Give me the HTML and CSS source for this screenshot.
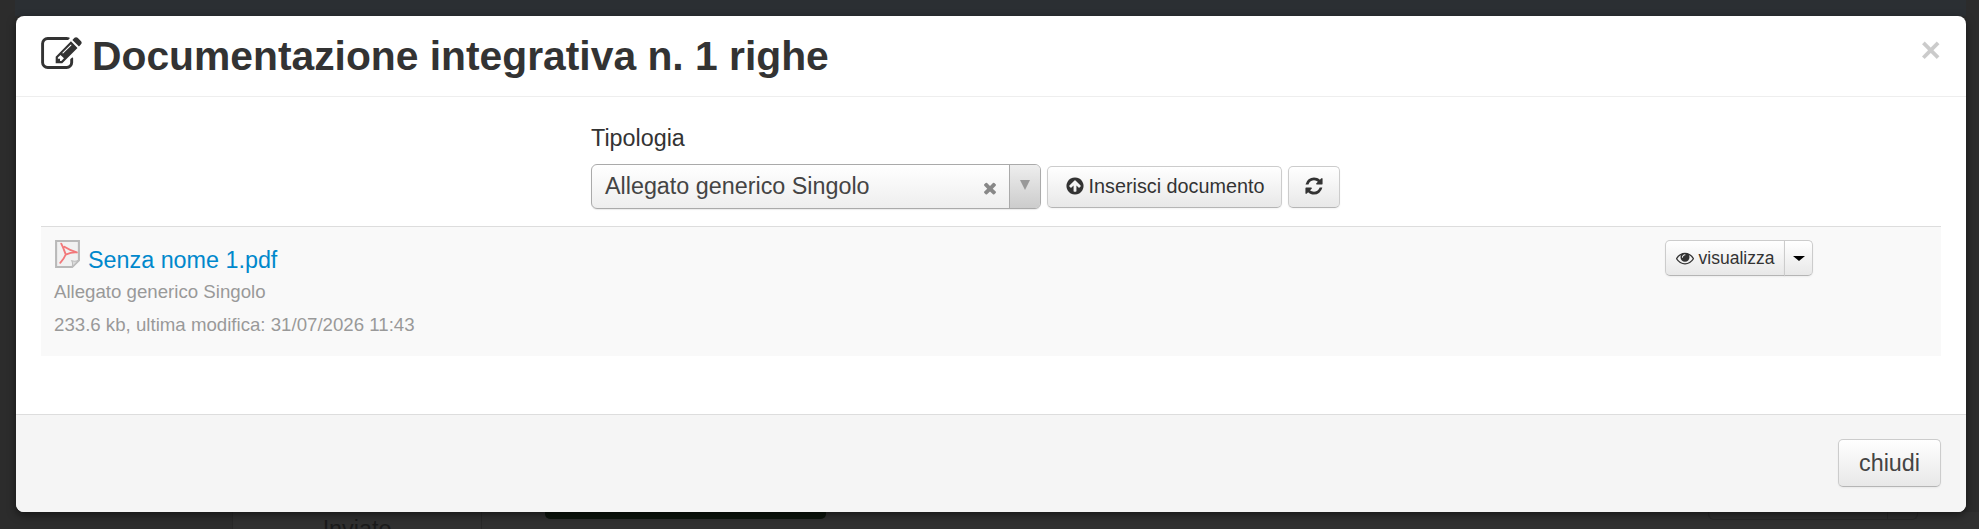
FILE: index.html
```html
<!DOCTYPE html>
<html lang="en">
<head>
    <meta charset="UTF-8">
    <meta name="viewport" content="width=device-width, initial-scale=1.0">
    <title>Documentazione integrativa</title>
    <link rel="stylesheet" href="styles.css">
</head>
<body>
    <div class="page">
        <div class="top-bar"></div>
        <div class="table-peek">
            <div class="cell-state"><span>Inviato</span></div>
            <div class="cell-action"><div class="dark-btn"></div></div>
            <div class="cell-last"><div class="cell-last-side"></div></div>
        </div>
    </div>

    <div class="modal">
        <div class="modal-header">
            <svg class="title-icon" viewBox="0 128 1792 1408"><path d="M888 1184l116-116-152-152-116 116v56h96v96h56zm440-720q-16-16-33 1l-350 350q-17 17-1 33t33-1l350-350q17-17 1-33zm80 594v190q0 119-84.5 203.5t-203.5 84.5h-832q-119 0-203.5-84.5t-84.5-203.5v-832q0-119 84.5-203.5t203.5-84.5h832q63 0 117 25 15 7 18 23 3 17-9 29l-49 49q-14 14-32 8-23-6-45-6h-832q-66 0-113 47t-47 113v832q0 66 47 113t113 47h832q66 0 113-47t47-113v-126q0-13 9-22l64-64q15-15 35-7t20 29zm-96-738l288 288-672 672h-288v-288zm444 132l-92 92-288-288 92-92q28-28 68-28t68 28l152 152q28 28 28 68t-28 68z"/></svg>
            <h3>Documentazione integrativa n. 1 righe</h3>
            <span class="close">×</span>
        </div>

        <div class="modal-body">
            <div class="upload-form">
                <label>Tipologia</label>
                <div class="controls">
                    <div class="select-box">
                        <span class="select-value">Allegato generico Singolo</span>
                        <svg class="select-clear" viewBox="0 0 1792 1792"><path d="M1490 1322q0 40-28 68l-136 136q-28 28-68 28t-68-28l-294-294-294 294q-28 28-68 28t-68-28l-136-136q-28-28-28-68t28-68l294-294-294-294q-28-28-28-68t28-68l136-136q28-28 68-28t68 28l294 294 294-294q28-28 68-28t68 28l136 136q28 28 28 68t-28 68l-294 294 294 294q28 28 28 68z"/></svg>
                        <div class="select-arrow"><i></i></div>
                    </div>
                    <button class="btn btn-insert">
                        <svg class="btn-icon" viewBox="0 0 1792 1792"><path d="M1412 897q0-27-18-45l-362-362-91-91q-18-18-45-18t-45 18l-91 91-362 362q-18 18-18 45t18 45l91 91q18 18 45 18t45-18l189-189v502q0 26 19 45t45 19h128q26 0 45-19t19-45v-502l189 189q19 19 45 19t45-19l91-91q18-18 18-45zm252 1q0 209-103 385.5t-279.5 279.5-385.5 103-385.5-103-279.5-279.5-103-385.5 103-385.5 279.5-279.5 385.5-103 385.5 103 279.5 279.5 103 385.5z"/></svg>
                        Inserisci documento
                    </button>
                    <button class="btn btn-refresh">
                        <svg class="btn-icon" viewBox="0 0 1792 1792"><path d="M1639 1056q0 5-1 7-64 268-268 434.5t-478 166.5q-146 0-282.5-55t-243.5-157l-129 129q-19 19-45 19t-45-19-19-45v-448q0-26 19-45t45-19h448q26 0 45 19t19 45-19 45l-137 137q71 66 161 102t187 36q134 0 250-65t186-179q11-17 53-117 8-23 30-23h192q13 0 22.5 9.5t9.5 22.5zm25-800v448q0 26-19 45t-45 19h-448q-26 0-45-19t-19-45 19-45l138-138q-148-137-349-137-134 0-250 65t-186 179q-11 17-53 117-8 23-30 23h-199q-13 0-22.5-9.5t-9.5-22.5v-7q65-268 270-434.5t480-166.5q146 0 284 55.5t245 156.5l130-129q19-19 45-19t45 19 19 45z"/></svg>
                    </button>
                </div>
            </div>

            <div class="doc-row">
                <div class="doc-info">
                    <div class="doc-title">
                        <svg class="pdf-icon" viewBox="0 0 24 27">
                            <path d="M1 1h22v18.500l-6.500 6.500H1z" fill="#f1f1f1" stroke="#b9b9b9" stroke-width="2"/>
                            <path d="M23 19.500l-6.500 6.500c.6-2.200.4-4.400-.4-5.900 2.200.6 4.800.3 6.900-.6z" fill="#dcdcdc" stroke="#bdbdbd"/>
                            <path d="M6 3.500c2 4 3.200 7.500 4.300 10.500M10.300 14c-1.200 3-2.800 5.500-5.300 8M10.300 14c3.500-1.500 7.700-2.300 10.700-2M9 6.500c3 2 7.500 4 12 5.500" fill="none" stroke="#f2787a" stroke-width="1.800" stroke-linecap="round"/>
                        </svg>
                        <a class="doc-link">Senza nome 1.pdf</a>
                    </div>
                    <div class="doc-meta">Allegato generico Singolo</div>
                    <div class="doc-meta">233.6 kb, ultima modifica: 31/07/2026 11:43</div>
                </div>
                <div class="btn-group">
                    <button class="btn-small btn-view">
                        <svg class="eye-icon" viewBox="0 0 1792 1792"><path d="M1664 960q-152-236-381-353 61 104 61 225 0 185-131.500 316.500t-316.500 131.500-316.500-131.500-131.500-316.500q0-121 61-225-229 117-381 353 133 205 333.500 326.500t434.500 121.500 434.500-121.500 333.500-326.500zm-720-384q0-20-14-34t-34-14q-125 0-214.500 89.500t-89.500 214.500q0 20 14 34t34 14 34-14 14-34q0-86 61-147t147-61q20 0 34-14t14-34zm848 384q0 34-20 69-140 230-376.500 368.500t-499.500 138.500-499.500-139-376.500-368q-20-35-20-69t20-69q140-229 376.500-368t499.500-139 499.500 139 376.500 368q20 35 20 69z"/></svg>
                        visualizza
                    </button>
                    <button class="btn-small btn-caret"><i></i></button>
                </div>
            </div>
        </div>

        <div class="modal-footer">
            <button class="btn btn-close">chiudi</button>
        </div>
    </div>
</body>
</html>
```

FILE: styles.css
```css
* {
    box-sizing: border-box;
}

html, body {
    height: 100%;
}

body {
    margin: 0;
    font-family: "Liberation Sans", Arial, sans-serif;
    font-size: 18.67px;
    color: #333;
    background: #2c2c2c;
    overflow: hidden;
}

/* page behind the modal */
.page {
    height: 100%;
    display: flex;
    flex-direction: column;
    justify-content: space-between;
}

.top-bar {
    height: 16px;
    margin: 0 13px 0 15px;
    background: #2b2f33;
}

.table-peek {
    height: 17px;
    margin-left: 232px;
    display: flex;
    overflow: hidden;
    background: #303030;
}

.cell-state {
    width: 250px;
    border-left: 1px solid #282828;
    border-right: 1px solid #282828;
    text-align: center;
    padding-top: 5px;
    font-size: 23.33px;
    line-height: 24px;
    color: #1a1a1a;
}

.cell-action {
    flex: 1;
    padding-left: 63px;
}

.dark-btn {
    width: 281px;
    height: 7px;
    background: #0d150d;
    border-radius: 0 0 5px 5px;
}

.cell-last {
    width: 210px;
    height: 8px;
    margin-right: 61px;
    display: flex;
    justify-content: flex-end;
    border: 1px solid #292929;
    border-top: none;
    border-radius: 0 0 6px 6px;
}

.cell-last-side {
    width: 30px;
    border-left: 1px solid #292929;
}

/* modal */
.modal {
    position: absolute;
    top: 16px;
    left: 16px;
    width: 1950px;
    height: 496px;
    display: flex;
    flex-direction: column;
    background: #fff;
    border-radius: 8px;
    overflow: hidden;
    box-shadow: 0 3px 9px rgba(0, 0, 0, 0.5);
}

.modal-header {
    position: relative;
    height: 81px;
    display: flex;
    align-items: center;
    gap: 10px;
    padding: 0 25px;
    border-bottom: 1px solid #eee;
}

.modal-header h3 {
    margin: 0;
    font-size: 40.8px;
    line-height: 50px;
    font-weight: bold;
    color: #333;
}

.title-icon {
    width: 41px;
    height: 32px;
    margin-top: -6px;
    fill: #333;
}

.close {
    position: absolute;
    top: 14px;
    right: 25px;
    font-size: 35px;
    line-height: 40px;
    font-weight: bold;
    color: #000;
    opacity: 0.2;
}

.modal-body {
    flex: 1;
    padding: 0 25px;
}

.upload-form {
    height: 129px;
    padding: 26px 0 0 550px;
}

.upload-form label {
    display: block;
    font-size: 23.33px;
    line-height: 30px;
    margin-bottom: 11px;
}

.controls {
    display: flex;
    align-items: flex-end;
    gap: 6px;
}

.select-box {
    width: 450px;
    height: 45px;
    display: flex;
    align-items: center;
    padding-left: 13px;
    border: 1px solid #aaa;
    border-radius: 6px;
    background: linear-gradient(#fff, #eee);
    box-shadow: 0 1px 1px rgba(0, 0, 0, 0.08);
    overflow: hidden;
}

.select-value {
    flex: 1;
    font-size: 23.33px;
    color: #444;
}

.select-clear {
    width: 18px;
    height: 18px;
    margin-right: 10px;
    margin-top: 2px;
    fill: #888;
}

.select-arrow {
    width: 31px;
    height: 100%;
    display: flex;
    align-items: center;
    justify-content: center;
    border-left: 1px solid #aaa;
    background: linear-gradient(#eee, #ccc);
}

.select-arrow i {
    border-top: 10px solid #999;
    border-left: 5px solid transparent;
    border-right: 5px solid transparent;
    margin-top: -4px;
}

.btn {
    height: 42px;
    display: inline-flex;
    align-items: center;
    justify-content: center;
    padding: 0;
    font-family: inherit;
    font-size: 19.8px;
    color: #333;
    background: linear-gradient(#fff, #e8e8e8);
    border: 1px solid #ccc;
    border-bottom-color: #b5b5b5;
    border-radius: 5px;
    box-shadow: inset 0 1px 0 rgba(255, 255, 255, 0.2), 0 1px 2px rgba(0, 0, 0, 0.05);
}

.btn-icon {
    width: 20px;
    height: 20px;
    fill: #333;
}

.btn-insert {
    width: 235px;
    gap: 4px;
    margin-bottom: 1px;
    padding-bottom: 2px;
}

.btn-refresh {
    width: 52px;
    margin-bottom: 1px;
    padding-bottom: 2px;
}

.doc-row {
    height: 130px;
    display: flex;
    justify-content: space-between;
    padding: 13px 128px 0 14px;
    background: #f9f9f9;
    border-top: 1px solid #ddd;
}

.doc-title {
    display: flex;
    align-items: flex-end;
    gap: 8px;
    height: 35px;
}

.pdf-icon {
    width: 25px;
    height: 28px;
    margin-bottom: 7px;
    filter: blur(0.4px);
}

.doc-link {
    font-size: 23.33px;
    line-height: 30px;
    color: #0088cc;
}

.doc-meta {
    margin-left: -1px;
    font-size: 18.67px;
    line-height: 33px;
    color: #999;
}

.doc-meta:first-of-type {
    margin-top: 4px;
}

.btn-group {
    display: flex;
    height: 36px;
}

.btn-small {
    display: inline-flex;
    align-items: center;
    justify-content: center;
    padding: 0;
    font-family: inherit;
    font-size: 17.5px;
    color: #333;
    background: linear-gradient(#fff, #e8e8e8);
    border: 1px solid #ccc;
    border-bottom-color: #b5b5b5;
    box-shadow: 0 1px 2px rgba(0, 0, 0, 0.05);
}

.btn-view {
    width: 120px;
    gap: 5px;
    border-radius: 5px 0 0 5px;
}

.eye-icon {
    width: 18px;
    height: 18px;
    fill: #333;
}

.btn-caret {
    width: 29px;
    margin-left: -1px;
    border-radius: 0 5px 5px 0;
}

.btn-caret i {
    border-top: 5px solid #000;
    border-left: 6px solid transparent;
    border-right: 6px solid transparent;
}

.modal-footer {
    height: 98px;
    display: flex;
    justify-content: flex-end;
    padding: 24px 25px 0 0;
    background: #f5f5f5;
    border-top: 1px solid #ddd;
}

.btn-close {
    width: 103px;
    height: 48px;
    font-size: 23.33px;
    color: #444;
}
```
